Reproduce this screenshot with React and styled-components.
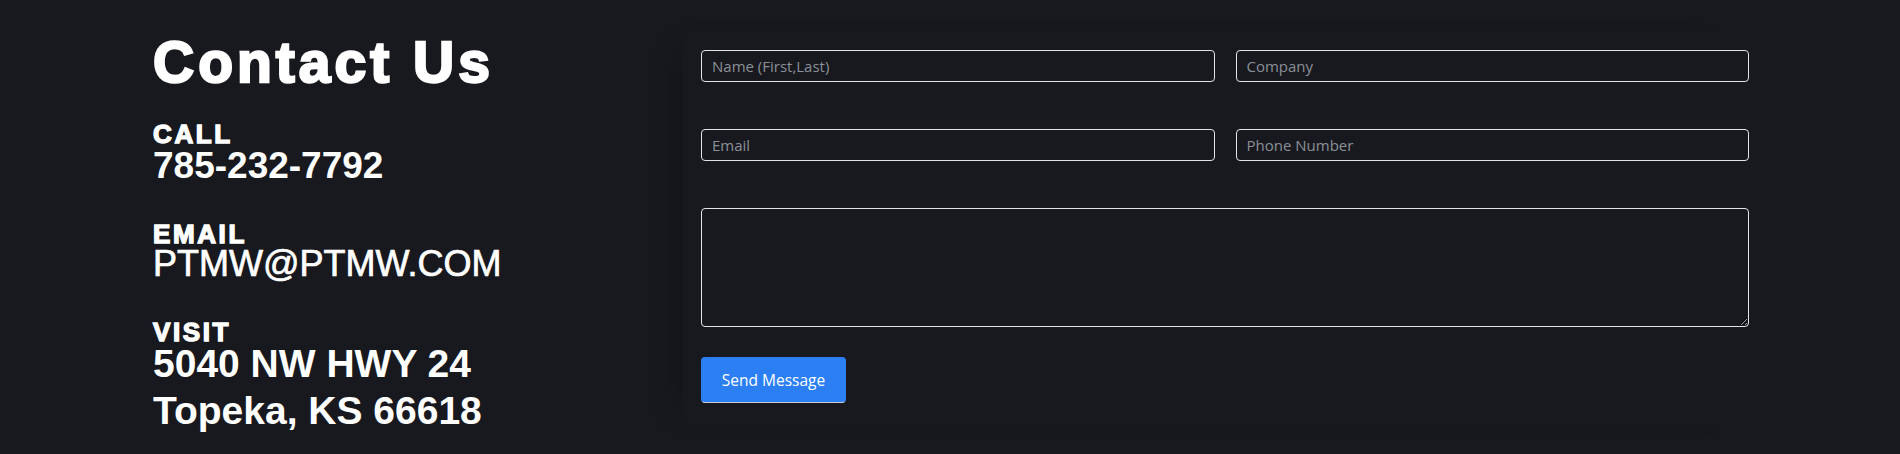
import React from 'react'
import styled, { createGlobalStyle } from 'styled-components';

const GlobalStyle = createGlobalStyle`
  html, body {
    margin: 0;
    padding: 0;
    background-color: #18191e;
  }
  * {
    box-sizing: border-box;
  }
`

const Section = styled.section`
  min-height: 454px;
  width: 100%;
  background-color: #18191e;
  padding-top: 30px;
  overflow: hidden;
`

const Container = styled.div`
  width: 1600px;
  margin: 0 auto;
  display: flex;
  align-items: flex-start;
`

const InfoColumn = styled.div`
  width: 533px;
  flex-shrink: 0;
  padding-left: 3px;
  color: #ffffff;
  font-family: "Liberation Sans", Arial, sans-serif;
`

const Title = styled.h1`
  margin: 0 0 27px 0;
  font-size: 57px;
  line-height: 64px;
  font-weight: 700;
  letter-spacing: 4px;
  -webkit-text-stroke: 2.4px #ffffff;
`

const Group = styled.div`
  margin-top: ${props => props.$gap || 0}px;
`

const Label = styled.h3`
  margin: 0;
  font-size: 26px;
  line-height: 26px;
  font-weight: 700;
  letter-spacing: 2.6px;
  -webkit-text-stroke: 1.4px #ffffff;
`

const Value = styled.p`
  margin: ${props => props.$top || 0}px 0 0 0;
  font-size: ${props => props.$size || 37}px;
  line-height: ${props => props.$line || 37}px;
  font-weight: ${props => props.$weight || 700};
  -webkit-text-stroke: ${props => props.$stroke || 0}px #ffffff;
`

const FormColumn = styled.div`
  flex: 1;
  padding: 20px 1px 0 18px;
  position: relative;
  box-shadow: -22px 0 28px -24px rgba(0, 0, 0, 0.35);
  min-height: 400px;
`

const Form = styled.form`
  display: flex;
  flex-direction: column;
`

const Row = styled.div`
  display: flex;
  gap: 21px;
  margin-bottom: ${props => props.$gap || 47}px;
`

const Input = styled.input`
  flex: 1;
  min-width: 0;
  height: 32px;
  padding: 0 10px;
  background-color: #18191e;
  border: 1px solid #e4e4e4;
  border-radius: 4px;
  color: #ffffff;
  font-family: "Open Sans", "Noto Sans", sans-serif;
  font-size: 15px;
  outline: none;

  &::placeholder {
    color: #8b9098;
  }
`

const TextArea = styled.textarea`
  flex: 1;
  height: 119px;
  padding: 8px 10px;
  background-color: #18191e;
  border: 1px solid #e4e4e4;
  border-radius: 4px;
  color: #ffffff;
  font-family: "Open Sans", "Noto Sans", sans-serif;
  font-size: 15px;
  outline: none;
`

const Button = styled.button`
  width: 145px;
  height: 46px;
  background-color: #2b7ff2;
  color: #ffffff;
  border: 1px solid #2b7ff2;
  border-bottom-color: #c9ccd2;
  border-radius: 4px;
  font-family: "Open Sans", "Noto Sans", sans-serif;
  font-size: 15.5px;
  cursor: pointer;
`

const Contact = () => {
  return (
    <Section>
      <GlobalStyle />
      <Container>
        <InfoColumn>
          <Title>Contact Us</Title>
          <Group>
            <Label>CALL</Label>
            <Value>785-232-7792</Value>
          </Group>
          <Group $gap={37}>
            <Label>EMAIL</Label>
            <Value $size={36} $line={34} $weight={400} $stroke={0.7}>PTMW@PTMW.COM</Value>
          </Group>
          <Group $gap={38}>
            <Label>VISIT</Label>
            <Value $size={39} $line={38}>5040 NW HWY 24</Value>
            <Value $size={39} $line={38} $top={9}>Topeka, KS 66618</Value>
          </Group>
        </InfoColumn>
        <FormColumn>
          <Form onSubmit={e => e.preventDefault()}>
            <Row>
              <Input type="text" placeholder="Name (First,Last)" />
              <Input type="text" placeholder="Company" />
            </Row>
            <Row>
              <Input type="email" placeholder="Email" />
              <Input type="tel" placeholder="Phone Number" />
            </Row>
            <Row $gap={30}>
              <TextArea />
            </Row>
            <div>
              <Button type="submit">Send Message</Button>
            </div>
          </Form>
        </FormColumn>
      </Container>
    </Section>
  )
}

export default Contact;
